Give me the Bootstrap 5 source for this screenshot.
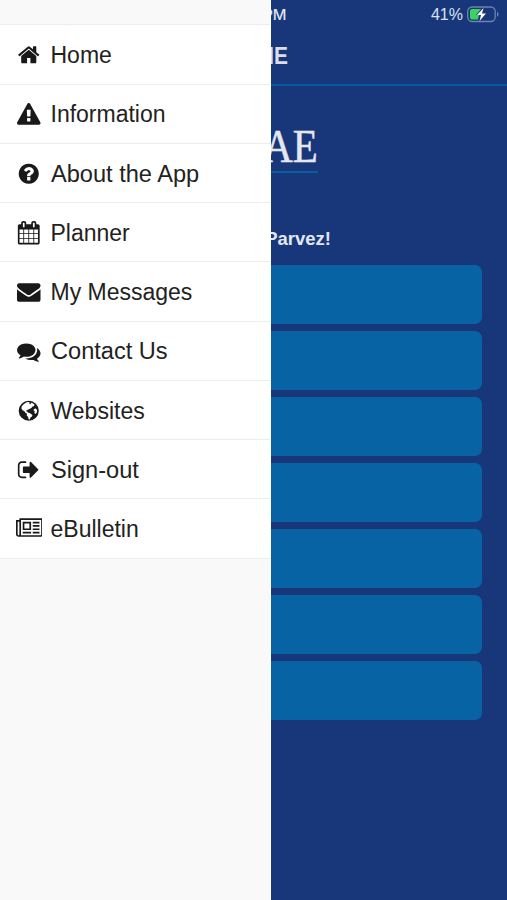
<!DOCTYPE html>
<html lang="en">
<head>
<meta charset="utf-8">
<meta name="viewport" content="width=device-width, initial-scale=1">
<title>Home</title>
<link href="https://cdn.jsdelivr.net/npm/bootstrap@5.3.0/dist/css/bootstrap.min.css" rel="stylesheet">
<style>
body { font-family: "Liberation Sans", Arial, sans-serif; background: #17377a; }
.side-menu { width: 271px; background: #f9f9f9; border-right: 1px solid #fff; }
.side-top { height: 25.4px; border-bottom: 1px solid #ececee; }
.side-menu .list-group-item { height: 59.25px; padding: 0 0 0 15px; font-size: 23px; line-height: 1; color: #222; border-color: #ededef; border-width: 0 0 1px !important; }
.side-menu .list-group-item > span { padding-top: 2.4px; }
.side-menu .list-group-item > .icon-slot { padding-top: 1px; }
.wide-text { transform: scaleX(1.025); transform-origin: left; }
.icon-slot { width: 28px; margin-right: 7.5px; }
.icon-slot svg { height: 23.5px; fill: #191919; flex-shrink: 0; }
.icon-slot .news { margin-top: -2px; margin-bottom: 2px; }
.status-bar { height: 29px; color: #dbe2f0; font-size: 16.5px; }
.clock-end { width: 15.5px; font: 500 15px Inter, sans-serif; }
.charge { font: 400 16px "Liberation Sans", sans-serif; }
.title-bar { height: 57px; border-bottom: 2px solid #075b9d; }
.title-end { width: 17px; font-size: 23.3px; color: #d9deeb; }
.title-end span { transform: scaleX(.9); transform-origin: right; }
.brand-end { width: 47px; height: 52px; margin-top: 35px; border-bottom: 2px solid #0b5b9f; font: 47px/50px "Liberation Serif", serif; color: #e6e7ee; }
.brand-end span { transform: scaleX(.87); transform-origin: right; -webkit-text-stroke: .5px #e6e7ee; }
.greet-end { width: 60px; height: 26px; margin-top: 53px; font-size: 18.5px; color: #e2e7f3; }
.tiles { margin-top: 13px; padding-right: 25px; gap: 6.6px; }
.tile { height: 59.4px; background: #0863a4; border-radius: 0 7px 7px 0; }
</style>
</head>
<body>
<div class="d-flex vh-100 overflow-hidden">
  <nav class="side-menu flex-shrink-0">
    <div class="side-top"></div>
    <div class="list-group list-group-flush rounded-0">
      <a href="#" class="list-group-item d-flex align-items-center"><span class="icon-slot d-flex justify-content-center"><svg viewBox="0 0 1792 1792"><path d="M1472 992v480q0 26-19 45t-45 19h-384v-384h-256v384h-384q-26 0-45-19t-19-45v-480q0-1 .5-3t.5-3l575-474 575 474q1 2 1 6zm223-69l-62 74q-8 9-21 11h-3q-13 0-21-7l-692-577-692 577q-12 8-24 7-13-2-21-11l-62-74q-8-10-7-23.5t11-21.5l719-599q32-26 76-26t76 26l244 204v-195q0-14 9-23t23-9h192q14 0 23 9t9 23v408l219 182q10 8 11 21.5t-7 23.5z"/></svg></span><span>Home</span></a>
      <a href="#" class="list-group-item d-flex align-items-center"><span class="icon-slot d-flex justify-content-center"><svg viewBox="0 0 1792 1792"><path d="M1024 1375v-190q0-14-9.500-23.500t-22.500-9.500h-192q-13 0-22.500 9.500t-9.500 23.500v190q0 14 9.500 23.500t22.500 9.500h192q13 0 22.500-9.500t9.500-23.500zm-2-374l18-459q0-12-10-19-13-11-24-11h-220q-11 0-24 11-10 7-10 21l17 457q0 10 10 16.500t24 6.500h185q14 0 23.500-6.500t10.500-16.500zm-14-934l768 1408q35 63-2 126-17 29-46.500 46t-63.500 17h-1536q-34 0-63.500-17t-46.500-46q-37-63-2-126l768-1408q17-31 47-49t65-18 65 18 47 49z"/></svg></span><span>Information</span></a>
      <a href="#" class="list-group-item d-flex align-items-center"><span class="icon-slot d-flex justify-content-center"><svg viewBox="0 0 1792 1792"><path d="M1024 1376v-192q0-14-9-23t-23-9h-192q-14 0-23 9t-9 23v192q0 14 9 23t23 9h192q14 0 23-9t9-23zm256-672q0-88-55.500-163t-138.500-116-170-41q-243 0-371 213-15 24 8 42l132 100q7 6 19 6 16 0 25-12 53-68 86-92 34-24 86-24 48 0 85.500 26t37.500 59q0 38-20 61t-68 45q-63 28-115.500 86.500t-52.500 125.500v36q0 14 9 23t23 9h192q14 0 23-9t9-23q0-19 21.500-49.500t54.500-49.500q32-18 49-28.500t46-35 44.500-48 28-60.500 12.500-81zm384 192q0 209-103 385.500t-279.500 279.500-385.500 103-385.500-103-279.500-279.500-103-385.500 103-385.500 279.500-279.500 385.500-103 385.500 103 279.500 279.500 103 385.500z"/></svg></span><span class="wide-text">About the App</span></a>
      <a href="#" class="list-group-item d-flex align-items-center"><span class="icon-slot d-flex justify-content-center"><svg viewBox="0 0 1792 1792"><path d="M192 1664h288v-288h-288v288zm352 0h320v-288h-320v288zm-352-352h288v-320h-288v320zm352 0h320v-320h-320v320zm-352-384h288v-288h-288v288zm736 736h320v-288h-320v288zm-384-736h320v-288h-320v288zm768 736h288v-288h-288v288zm-384-352h320v-320h-320v320zm-352-864v-288q0-13-9.500-22.500t-22.500-9.500h-64q-13 0-22.500 9.500t-9.500 22.500v288q0 13 9.500 22.500t22.500 9.500h64q13 0 22.500-9.500t9.500-22.500zm736 864h288v-320h-288v320zm-384-384h320v-288h-320v288zm384 0h288v-288h-288v288zm32-480v-288q0-13-9.500-22.500t-22.500-9.500h-64q-13 0-22.500 9.500t-9.500 22.500v288q0 13 9.500 22.500t22.500 9.500h64q13 0 22.500-9.500t9.500-22.500zm384-64v1280q0 52-38 90t-90 38h-1408q-52 0-90-38t-38-90v-1280q0-52 38-90t90-38h128v-96q0-66 47-113t113-47h64q66 0 113 47t47 113v96h384v-96q0-66 47-113t113-47h64q66 0 113 47t47 113v96h128q52 0 90 38t38 90z"/></svg></span><span>Planner</span></a>
      <a href="#" class="list-group-item d-flex align-items-center"><span class="icon-slot d-flex justify-content-center"><svg viewBox="0 0 1792 1792"><path d="M1792 710v794q0 66-47 113t-113 47h-1472q-66 0-113-47t-47-113v-794q44 49 101 87 362 246 497 345 57 42 92.500 65.500t94.500 48 110 24.500h2q51 0 110-24.500t94.500-48 92.500-65.500q170-123 498-345 57-39 100-87zm0-294q0 79-49 151t-122 123q-376 261-468 325-10 7-42.500 31t-54 38.500-52 32.500-57.500 27-50 9h-2q-23 0-50-9t-57.500-27-52-32.500-54-38.500-42.500-31q-91-64-262-182.500t-205-142.500q-62-42-117-115.500t-55-136.500q0-78 41.500-130t118.500-52h1472q65 0 112.500 47t47.500 113z"/></svg></span><span>My Messages</span></a>
      <a href="#" class="list-group-item d-flex align-items-center"><span class="icon-slot d-flex justify-content-center"><svg viewBox="0 0 1792 1792"><path d="M1408 768q0 139-94 257t-256.500 186.500-353.500 68.500q-86 0-176-16-124 88-278 128-36 9-86 16h-3q-11 0-20.500-8t-11.500-21q-1-8 4-18l10-14 32-35q26-29 48-58t46-83q-124-72-195-177t-71-224q0-139 94-257t256.500-186.500 353.500-68.500 353.500 68.500 256.500 186.500 94 257zm384 256q0 120-71 224.500t-195 176.500q24 54 46 83t48 58l32 35q14 16 13 32-3 14-13 22t-22 7q-50-7-86-16-154-40-278-128-90 16-176 16-271 0-472-132 58 4 88 4 161 0 309-45t264-129q125-92 192-212t67-254q0-77-23-152 129 71 204 178t75 230z"/></svg></span><span class="wide-text">Contact Us</span></a>
      <a href="#" class="list-group-item d-flex align-items-center"><span class="icon-slot d-flex justify-content-center"><svg viewBox="0 0 1792 1792"><path fill-rule="evenodd" d="M896 128a768 768 0 1 0 0 1536a768 768 0 1 0 0-1536zM690 270l160-50 130 40-50 90 80 60 70-120 130 40 130 110-50 110-110 20-60 90-110 40 30 80-110-30-80 70-110 20-40 90 80 30 60 90 140 20 110 100 90 50-40 120-110 70-60 160-80-10-40-190-110-110 20-130-120-80-90-130-130-60-80-130 10-130 110-160zM1290 770l150-40 90 110-10 170-110 130-90-80 40-110-100-90z"/></svg></span><span>Websites</span></a>
      <a href="#" class="list-group-item d-flex align-items-center"><span class="icon-slot d-flex justify-content-center"><svg viewBox="0 0 1792 1792"><path d="M704 1440q0 4 1 20t.5 26.500-3 23.500-10 19.500-20.500 6.500h-320q-119 0-203.500-84.500t-84.500-203.500v-704q0-119 84.500-203.500t203.500-84.500h320q13 0 22.500 9.500t9.500 22.500q0 4 1 20t.5 26.500-3 23.500-10 19.500-20.500 6.500h-320q-66 0-113 47t-47 113v704q0 66 47 113t113 47h312q37 0 40 32zm928-544q0 26-19 45l-544 544q-19 19-45 19t-45-19-19-45v-288h-448q-26 0-45-19t-19-45v-384q0-26 19-45t45-19h448v-288q0-26 19-45t45-19 45 19l544 544q19 19 19 45z"/></svg></span><span class="wide-text">Sign-out</span></a>
      <a href="#" class="list-group-item d-flex align-items-center"><span class="icon-slot d-flex justify-content-center"><svg class="news" viewBox="0 0 2048 1792"><path d="M1024 640h-384v384h384v-384zm128 640v128h-640v-128h640zm0-768v640h-640v-640h640zm640 768v128h-512v-128h512zm0-256v128h-512v-128h512zm0-256v128h-512v-128h512zm0-256v128h-512v-128h512zm-1536 960v-960h-128v960q0 26 19 45t45 19 45-19 19-45zm1664 0v-1088h-1536v1088q0 33-11 64h1483q26 0 45-19t19-45zm128-1216v1216q0 80-56 136t-136 56h-1664q-80 0-136-56t-56-136v-1088h256v-128h1792z"/></svg></span><span>eBulletin</span></a>
    </div>
  </nav>
  <main class="flex-grow-1 overflow-hidden">
    <div class="status-bar d-flex align-items-center justify-content-between">
      <div class="clock-end d-flex justify-content-end">PM</div>
      <div class="d-flex align-items-center pe-2">
        <span class="charge me-1">41%</span>
        <svg width="32" height="17" viewBox="0 0 32 17"><rect x=".7" y="1" width="27.500" height="14.500" rx="4.500" fill="none" stroke="#6f83b0" stroke-width="1.300"/><path d="M30 5.500q3 2.700 0 5.500z" fill="#6f83b0"/><path d="M5 3h9l-5 6h3l-1 4.500H5q-2 0-2-2V5q0-2 2-2z" fill="#3ad45c"/><path d="M16.500 2L10 9h4l-1.500 6L19 7.500h-4z" fill="#fff"/></svg>
      </div>
    </div>
    <div class="title-bar d-flex align-items-center">
      <div class="title-end d-flex justify-content-end fw-bold"><span>HOME</span></div>
    </div>
    <div class="brand-end d-flex justify-content-end"><span>AE</span></div>
    <div class="greet-end d-flex justify-content-end align-items-center fw-bold">Parvez!</div>
    <div class="tiles d-flex flex-column">
      <div class="tile"></div>
      <div class="tile"></div>
      <div class="tile"></div>
      <div class="tile"></div>
      <div class="tile"></div>
      <div class="tile"></div>
      <div class="tile"></div>
    </div>
  </main>
</div>
<script src="https://cdn.jsdelivr.net/npm/bootstrap@5.3.0/dist/js/bootstrap.bundle.min.js"></script>
</body>
</html>
